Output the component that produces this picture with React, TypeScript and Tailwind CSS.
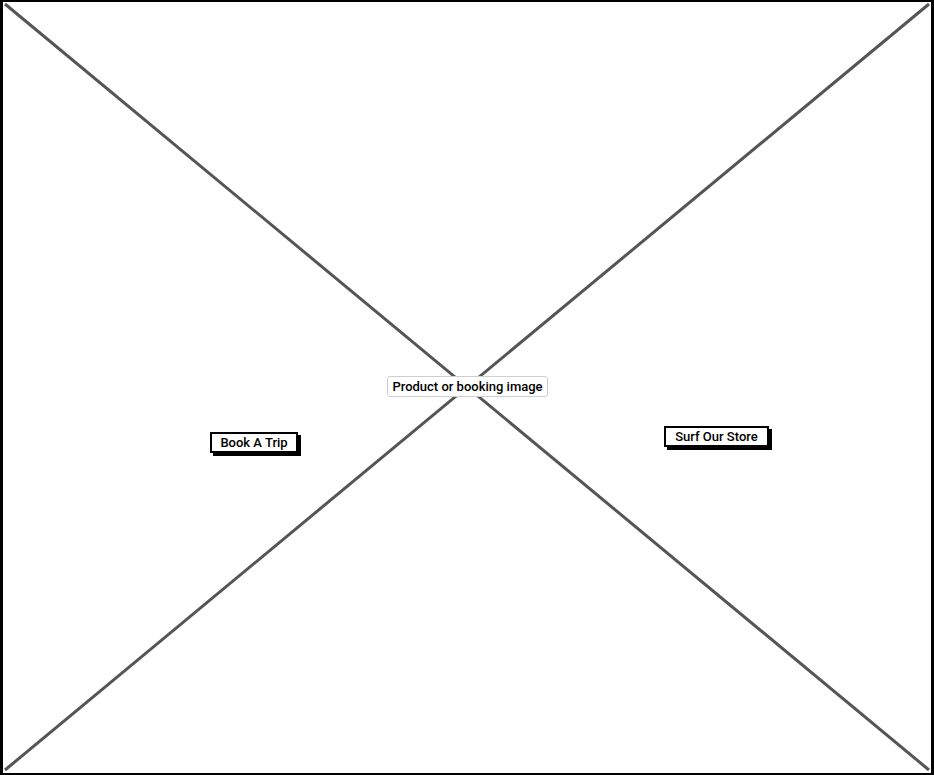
export default function App() {
  return (
    <main className="h-[775px] w-[934px] bg-white">
      <div className="relative h-full w-full border-2 border-l-[3px] border-r-[3px] border-black bg-white font-['Roboto','Liberation_Sans',Arial,sans-serif]">
        {/* placeholder cross */}
        <svg
          className="absolute inset-0 h-full w-full"
          viewBox="0 0 928 771"
          preserveAspectRatio="none"
        >
          <line x1="2" y1="2" x2="926" y2="768" stroke="#555" strokeWidth="3" />
          <line x1="926" y1="2" x2="2" y2="768" stroke="#555" strokeWidth="3" />
        </svg>

        {/* caption */}
        <div className="absolute left-[384px] top-[374px] flex h-[21px] w-[161px] items-center justify-center rounded-[3px] border border-[#cfcfcf] bg-white text-[13px] font-medium text-black">
          Product or booking image
        </div>

        {/* buttons */}
        <button className="absolute left-[207px] top-[430px] flex h-[21px] w-[88px] items-center justify-center border-2 border-black bg-white text-[13px] font-medium text-black shadow-[3px_3px_0_#000]">
          Book A Trip
        </button>
        <button className="absolute left-[661px] top-[424px] flex h-[21px] w-[105px] items-center justify-center border-2 border-black bg-white text-[13px] font-medium text-black shadow-[3px_3px_0_#000]">
          Surf Our Store
        </button>
      </div>
    </main>
  );
}
